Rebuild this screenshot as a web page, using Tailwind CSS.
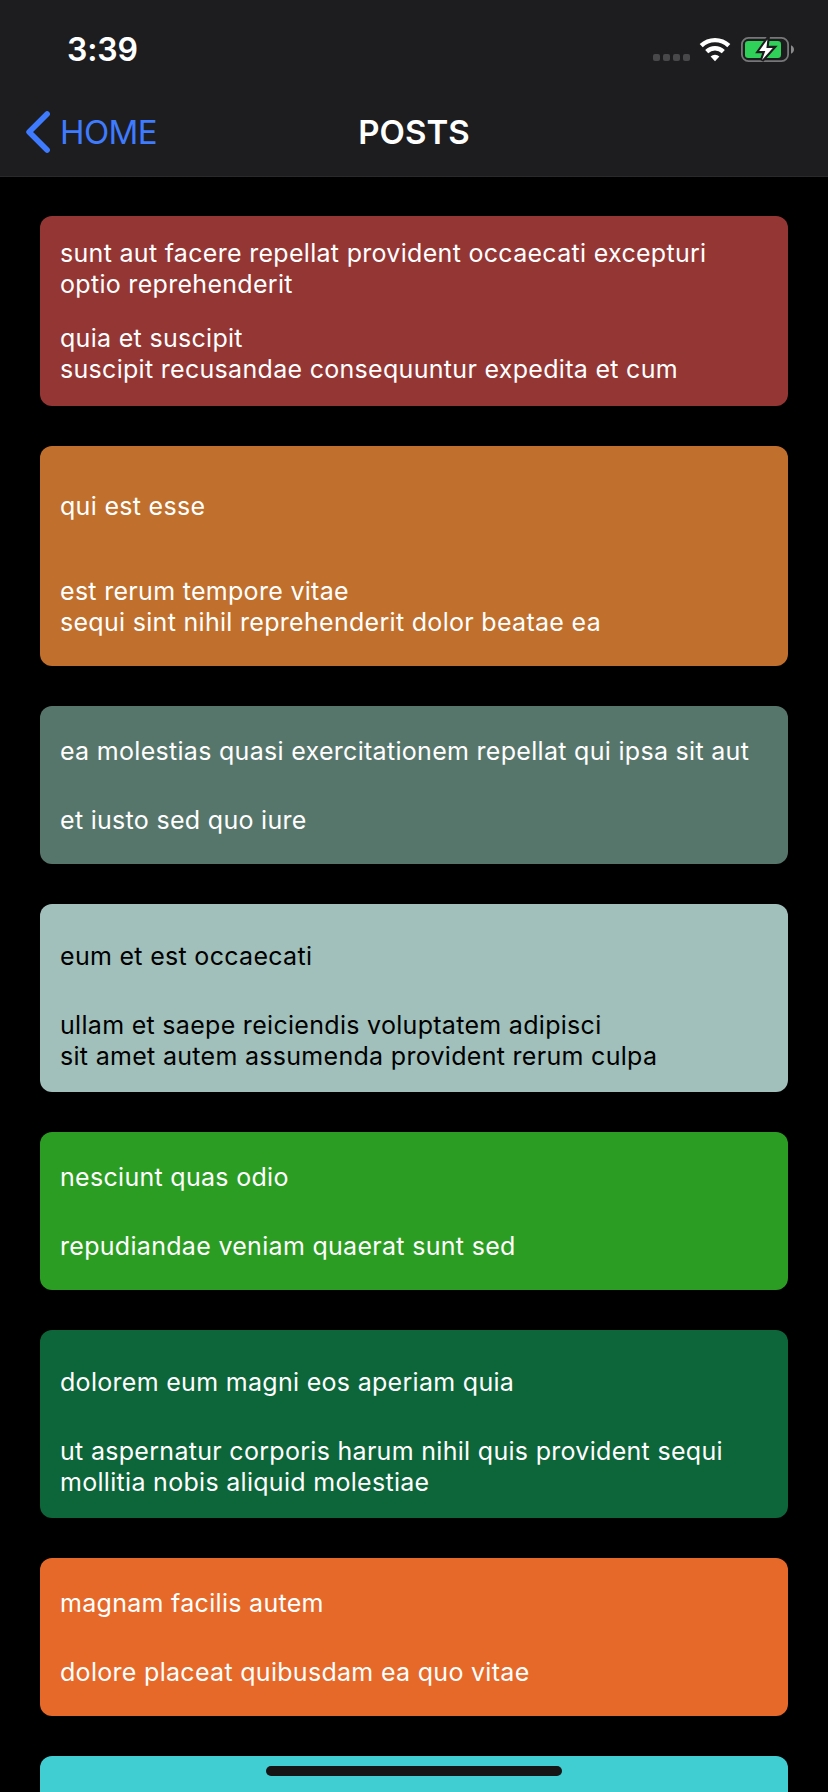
<!DOCTYPE html>
<html lang="en">
<head>
<meta charset="utf-8">
<title>Posts</title>
<script src="https://cdn.jsdelivr.net/npm/@tailwindcss/browser@4"></script>
</head>
<body class="bg-black">
<div class="relative flex h-[1792px] w-[828px] flex-col overflow-hidden bg-black font-['Inter',sans-serif] text-white">

  <header class="h-[177px] shrink-0 border-b border-[#29292b] bg-[#1d1d1f]">
    <!-- Status bar -->
    <div class="flex h-22 items-start justify-between pl-[67px] pr-[34px]">
      <span class="pt-[30px] text-[32px] leading-[39px] font-semibold tracking-[-0.1px]">3:39</span>
      <div class="flex items-start pt-[37px]">
        <div class="mr-[9px] flex gap-[3px] pt-[17px]">
          <span class="size-[7px] rounded-[2px] bg-[#48484a]"></span>
          <span class="size-[7px] rounded-[2px] bg-[#48484a]"></span>
          <span class="size-[7px] rounded-[2px] bg-[#48484a]"></span>
          <span class="size-[7px] rounded-[2px] bg-[#48484a]"></span>
        </div>
        <svg class="mr-[10px]" width="32" height="25" viewBox="0 0 32 25" fill="none" stroke="#fff">
          <path d="M2.2 8.6A20 20 0 0 1 29.8 8.6" stroke-width="4.4"/>
          <path d="M7.7 14.6A12 12 0 0 1 24.3 14.6" stroke-width="4.4"/>
          <path d="M16 24.2L11.6 19.6A6.4 6.4 0 0 1 20.4 19.6Z" fill="#fff" stroke="none"/>
        </svg>
        <svg width="53" height="25" viewBox="0 0 53 25" fill="none">
          <rect x="0.9" y="0.9" width="46.2" height="23.2" rx="6.6" stroke="#77777a" stroke-width="1.8"/>
          <rect x="4" y="4" width="36" height="17" rx="3.2" fill="#30d158"/>
          <path d="M50 8.3C51.8 9.2 53 10.7 53 12.5S51.8 15.8 50 16.7Z" fill="#8a8a8c"/>
          <path d="M26.6 2.2L18 14.2H24L20.8 23.4L32.2 10.8H25.6Z" fill="#1d1d1f" stroke="#1d1d1f" stroke-width="4"/>
          <path d="M26.4 2.6L18.2 14H24.3L21 23L31.8 10.9H25.4Z" fill="#fff"/>
        </svg>
      </div>
    </div>
    <!-- Navigation bar -->
    <div class="grid h-22 grid-cols-3 items-start pt-6">
      <a class="flex items-start pl-[25px] text-[#3e7bff]">
        <svg class="mr-[9px] -mt-1" width="26" height="48" viewBox="0 0 26 48" fill="none" stroke="currentColor" stroke-width="5.6" stroke-linecap="round" stroke-linejoin="round">
          <path d="M22.1 6L4.1 24L22.1 42"/>
        </svg>
        <span class="text-[33px] leading-10 tracking-[-0.6px]">HOME</span>
      </a>
      <h1 class="text-center text-[33px] leading-10 font-semibold">POSTS</h1>
    </div>
  </header>

  <main class="flex flex-col gap-10 px-10 pt-[39px] text-[25px] leading-[31px] tracking-[0.3px] whitespace-nowrap">
    <article class="flex h-[190px] shrink-0 flex-col gap-[23px] rounded-xl bg-[#943634] px-5 pt-[22px]">
      <h2>sunt aut facere repellat provident occaecati excepturi<br>optio reprehenderit</h2>
      <p>quia et suscipit<br>suscipit recusandae consequuntur expedita et cum</p>
    </article>
    <article class="flex h-[220px] shrink-0 flex-col gap-[54px] rounded-xl bg-[#c06f2c] px-5 pt-[45px]">
      <h2>qui est esse</h2>
      <p>est rerum tempore vitae<br>sequi sint nihil reprehenderit dolor beatae ea</p>
    </article>
    <article class="flex h-[158px] shrink-0 flex-col gap-[38px] rounded-xl bg-[#57766b] px-5 pt-[30px]">
      <h2>ea molestias quasi exercitationem repellat qui ipsa sit aut</h2>
      <p>et iusto sed quo iure</p>
    </article>
    <article class="flex h-[188px] shrink-0 flex-col gap-[38px] rounded-xl bg-[#a1c0bb] px-5 pt-[37px] text-black">
      <h2>eum et est occaecati</h2>
      <p>ullam et saepe reiciendis voluptatem adipisci<br>sit amet autem assumenda provident rerum culpa</p>
    </article>
    <article class="flex h-[158px] shrink-0 flex-col gap-[38px] rounded-xl bg-[#2c9d23] px-5 pt-[30px]">
      <h2>nesciunt quas odio</h2>
      <p>repudiandae veniam quaerat sunt sed</p>
    </article>
    <article class="flex h-[188px] shrink-0 flex-col gap-[38px] rounded-xl bg-[#0d653a] px-5 pt-[37px]">
      <h2>dolorem eum magni eos aperiam quia</h2>
      <p>ut aspernatur corporis harum nihil quis provident sequi<br>mollitia nobis aliquid molestiae</p>
    </article>
    <article class="flex h-[158px] shrink-0 flex-col gap-[38px] rounded-xl bg-[#e66929] px-5 pt-[30px]">
      <h2>magnam facilis autem</h2>
      <p>dolore placeat quibusdam ea quo vitae</p>
    </article>
    <article class="h-[158px] shrink-0 rounded-xl bg-[#40ced3]"></article>
  </main>

  <!-- Home indicator -->
  <div class="absolute bottom-4 left-[266px] h-[10px] w-[296px] rounded-full bg-[#151515]"></div>
</div>
</body>
</html>
